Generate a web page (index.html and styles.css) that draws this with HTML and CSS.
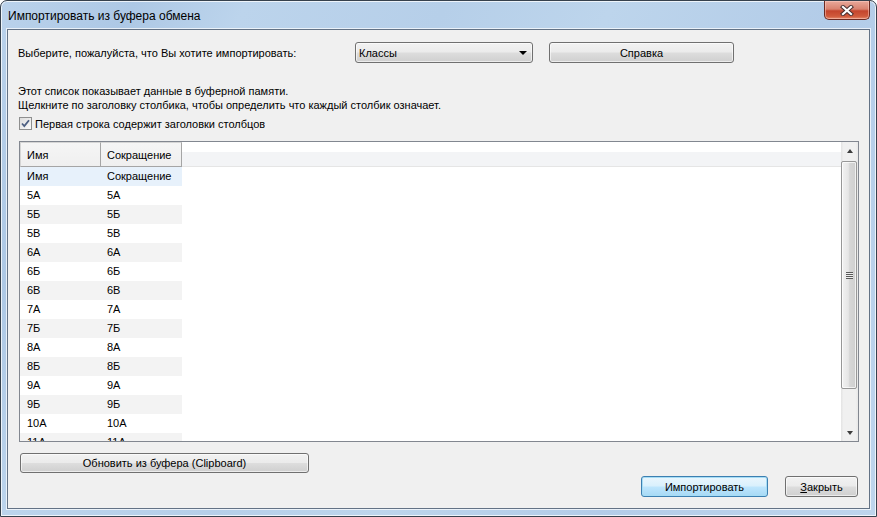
FILE: index.html
```html
<!DOCTYPE html>
<html lang="ru">
<head>
  <meta charset="UTF-8">
  <title>Импортировать из буфера обмена</title>
  <link rel="stylesheet" href="styles.css">
</head>
<body>

<div class="window">
  <div class="titlebar">
    <span class="title">Импортировать из буфера обмена</span>
    <div class="close-btn">
      <svg width="14" height="11" viewBox="0 0 14 11">
        <path d="M3 2 L11 9 M11 2 L3 9" stroke="#4a3030" stroke-width="4.2" stroke-linecap="square"/>
        <path d="M3 2 L11 9 M11 2 L3 9" stroke="#ffffff" stroke-width="2.2" stroke-linecap="square"/>
      </svg>
    </div>
  </div>

  <div class="client">
    <div class="top-row">
      <span class="prompt">Выберите, пожалуйста, что Вы хотите импортировать:</span>
      <div class="combo">
        <span>Классы</span>
        <span class="combo-arrow"></span>
      </div>
      <div class="btn help-btn">Справка</div>
    </div>

    <p class="hint">Этот список показывает данные в буферной памяти.<br>Щелкните по заголовку столбика, чтобы определить что каждый столбик означает.</p>

    <div class="check-row">
      <span class="checkbox">
        <svg width="11" height="11" viewBox="0 0 11 11">
          <path d="M2 5.5 L4.3 8 L9 2.2" fill="none" stroke="#4c5f82" stroke-width="1.8"/>
        </svg>
      </span>
      <span class="check-label">Первая строка содержит заголовки столбцов</span>
    </div>

    <div class="listview">
      <div class="list-main">
        <div class="list-header">
          <div class="col-head">Имя</div>
          <div class="col-head">Сокращение</div>
          <div class="head-fill"></div>
        </div>
        <div class="list-body">
          <div class="row first"><span>Имя</span><span>Сокращение</span></div>
          <div class="row"><span>5А</span><span>5А</span></div>
          <div class="row alt"><span>5Б</span><span>5Б</span></div>
          <div class="row"><span>5В</span><span>5В</span></div>
          <div class="row alt"><span>6А</span><span>6А</span></div>
          <div class="row"><span>6Б</span><span>6Б</span></div>
          <div class="row alt"><span>6В</span><span>6В</span></div>
          <div class="row"><span>7А</span><span>7А</span></div>
          <div class="row alt"><span>7Б</span><span>7Б</span></div>
          <div class="row"><span>8А</span><span>8А</span></div>
          <div class="row alt"><span>8Б</span><span>8Б</span></div>
          <div class="row"><span>9А</span><span>9А</span></div>
          <div class="row alt"><span>9Б</span><span>9Б</span></div>
          <div class="row"><span>10А</span><span>10А</span></div>
          <div class="row alt"><span>11А</span><span>11А</span></div>
        </div>
      </div>
      <div class="vscroll">
        <div class="scroll-btn"><span class="arrow-up"></span></div>
        <div class="thumb"><span class="grip"></span></div>
        <div class="track"></div>
        <div class="scroll-btn"><span class="arrow-down"></span></div>
      </div>
    </div>

    <div class="btn refresh-btn">Обновить из буфера (Clipboard)</div>

    <div class="bottom-row">
      <div class="btn default-btn import-btn">Импортировать</div>
      <div class="btn close-dlg-btn"><u>З</u>акрыть</div>
    </div>
  </div>
</div>

</body>
</html>
```

FILE: styles.css
```css
body {
  margin: 0;
  font-family: "Liberation Sans", Arial, sans-serif;
  font-size: 11px;
  color: #000;
  background: #fff;
}

.window {
  width: 877px;
  height: 517px;
  box-sizing: border-box;
  border: 1px solid #36414d;
  border-radius: 7px 7px 0 0;
  padding: 0 6px 7px;
  display: flex;
  flex-direction: column;
  background: linear-gradient(115deg, #bad2eb 0%, #adc8e5 12%, #bcd4ec 22%, #b6cfe9 40%, #bdd5ec 55%, #b3cce8 75%, #bed5ed 100%);
  box-shadow: inset 0 0 0 1px rgba(255, 255, 255, 0.75);
}

/* title bar */
.titlebar {
  height: 28px;
  display: flex;
  align-items: flex-start;
}
.title {
  font-size: 12px;
  line-height: 16px;
  padding: 7px 0 0 1px;
}
.close-btn {
  margin-left: auto;
  width: 46px;
  height: 19px;
  box-sizing: border-box;
  border: 1px solid #6b2a22;
  border-top: none;
  border-radius: 0 0 5px 5px;
  background: linear-gradient(#e9a99b 0%, #d9826f 45%, #c4452d 55%, #d05a3c 85%, #e58b6e 100%);
  box-shadow: inset 0 0 0 1px rgba(255, 210, 200, 0.5);
  display: flex;
  align-items: center;
  justify-content: center;
}

/* client area */
.client {
  flex: 1;
  border: 1px solid #637285;
  box-shadow: 0 0 0 1px rgba(255, 255, 255, 0.7);
  background: #f0f0f0;
  padding: 12px 10px 0 10px;
  display: flex;
  flex-direction: column;
}

.top-row {
  display: flex;
  align-items: center;
  height: 21px;
}
.prompt {
  width: 337px;
}

.btn {
  box-sizing: border-box;
  height: 21px;
  border: 1px solid #707070;
  border-radius: 3px;
  background: linear-gradient(#f2f2f2 0%, #ebebeb 48%, #dddddd 52%, #cfcfcf 100%);
  box-shadow: inset 0 0 0 1px rgba(255, 255, 255, 0.6);
  display: flex;
  align-items: center;
  justify-content: center;
}

.combo {
  box-sizing: border-box;
  width: 178px;
  height: 21px;
  border: 1px solid #707070;
  border-radius: 3px;
  background: linear-gradient(#f2f2f2 0%, #ebebeb 48%, #dddddd 52%, #cfcfcf 100%);
  box-shadow: inset 0 0 0 1px rgba(255, 255, 255, 0.6);
  display: flex;
  align-items: center;
  padding: 0 5px 0 3px;
}
.combo-arrow {
  margin-left: auto;
  width: 0;
  height: 0;
  border-left: 4px solid transparent;
  border-right: 4px solid transparent;
  border-top: 4px solid #000;
}
.help-btn {
  width: 185px;
  margin-left: 16px;
}

.hint {
  margin: 21px 0 0;
  line-height: 14px;
}

.check-row {
  display: flex;
  align-items: center;
  height: 17px;
  margin: 3px 0 0 1px;
}
.checkbox {
  box-sizing: border-box;
  width: 13px;
  height: 13px;
  border: 1px solid #8e8f8f;
  background: linear-gradient(135deg, #dcdcdc, #fbfbfb);
  display: flex;
  align-items: center;
  justify-content: center;
}
.check-label {
  width: 230px;
  margin-left: 3px;
  white-space: nowrap;
  overflow: hidden;
}

/* list view */
.listview {
  margin: 9px 0 0 1px;
  height: 301px;
  box-sizing: border-box;
  border: 1px solid #828790;
  background: #fff;
  display: flex;
}
.list-main {
  flex: 1;
  overflow: hidden;
}
.list-header {
  display: flex;
  height: 25px;
}
.col-head {
  box-sizing: border-box;
  width: 81px;
  border: 1px solid #a5a5a5;
  border-left: none;
  background: linear-gradient(#f5f5f5 0%, #efefef 100%);
  padding: 5px 0 0 6px;
  line-height: 14px;
}
.col-head:first-child {
  border-left: 1px solid #d5d5d5;
  border-top-color: #d5d5d5;
}
.col-head + .col-head {
  border-top-color: #d5d5d5;
}
.head-fill {
  flex: 1;
  border-bottom: 1px solid #e5e5e5;
  background: linear-gradient(#ffffff 0%, #ffffff 40%, #f3f4f6 42%, #f3f4f6 100%);
}

.list-body {
  height: 274px;
  overflow: hidden;
}
.row {
  display: grid;
  grid-template-columns: 81px 81px;
  width: 162px;
  height: 19px;
  line-height: 19px;
}
.row span {
  padding-left: 7px;
}
.row span + span {
  padding-left: 6px;
}
.row.first {
  background: #e7f1fb;
}
.row.alt {
  background: #f3f3f3;
}

/* scrollbar */
.vscroll {
  width: 17px;
  display: flex;
  flex-direction: column;
  background: linear-gradient(90deg, #e3e3e3 0%, #f0f0f0 15%, #f0f0f0 85%, #e8e8e8 100%);
}
.scroll-btn {
  height: 17px;
  display: flex;
  align-items: center;
  justify-content: center;
}
.arrow-up {
  width: 0;
  height: 0;
  border-left: 3.5px solid transparent;
  border-right: 3.5px solid transparent;
  border-bottom: 4px solid #3c3c3c;
}
.arrow-down {
  width: 0;
  height: 0;
  border-left: 3.5px solid transparent;
  border-right: 3.5px solid transparent;
  border-top: 4px solid #3c3c3c;
}
.thumb {
  box-sizing: border-box;
  height: 228px;
  margin: 2px 1px 0 0;
  border: 1px solid #979797;
  border-radius: 2px;
  background: linear-gradient(90deg, #f2f2f2 0%, #e6e6e6 45%, #d6d6d6 55%, #cfcfcf 100%);
  box-shadow: inset 0 0 0 1px rgba(255, 255, 255, 0.7);
  display: flex;
  align-items: center;
  justify-content: center;
}
.grip {
  width: 7px;
  height: 7px;
  background: repeating-linear-gradient(#5a5a5a 0 1px, #eeeeee 1px 2px);
}
.track {
  flex: 1;
}

/* buttons */
.refresh-btn {
  width: 289px;
  height: 20px;
  margin: 11px 0 0 2px;
}
.bottom-row {
  display: flex;
  justify-content: flex-end;
  margin: 3px 1px 0 0;
}
.import-btn {
  width: 127px;
}
.close-dlg-btn {
  width: 73px;
  margin-left: 17px;
}
.default-btn {
  border-color: #3c7fb1;
  box-shadow: inset 0 0 0 1px #a6ddf5;
  background: linear-gradient(#eaf6fd 0%, #d9f0fc 48%, #bee6fd 52%, #a7d9f5 100%);
}
```
